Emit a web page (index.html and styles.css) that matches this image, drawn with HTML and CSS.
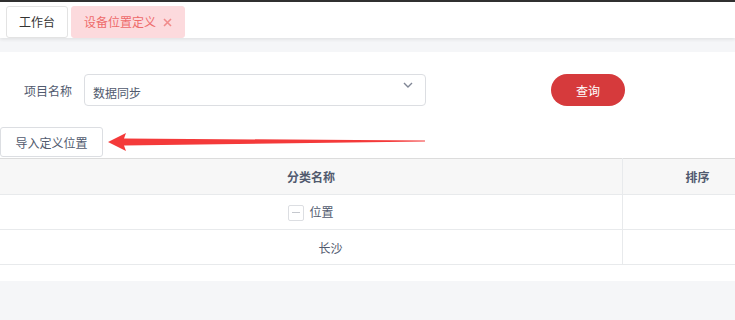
FILE: index.html
```html
<!DOCTYPE html>
<html>
<head>
    <meta charset="utf-8">
    <link rel="stylesheet" href="styles.css">
    <title>设备位置定义</title>
</head>
<body>
    <div class="topline"></div>
    <div class="tabbar">
        <div class="tab">工作台</div>
        <div class="tab tab-active">设备位置定义
            <svg class="tab-close" width="9" height="9" viewBox="0 0 9 9"><path d="M1 1 L8 8 M8 1 L1 8" stroke="#f08c8c" stroke-width="1.6"/></svg>
        </div>
    </div>

    <div class="panel">
        <div class="search-row">
            <label class="label">项目名称</label>
            <div class="select">
                <span>数据同步</span>
                <svg class="chevron" width="10" height="6" viewBox="0 0 10 6"><path d="M1 1 L5 5 L9 1" fill="none" stroke="#808695" stroke-width="1.4"/></svg>
            </div>
            <button class="btn-query" type="button">查询</button>
        </div>

        <div class="toolbar">
            <button class="btn-import" type="button">导入定义位置</button>
            <svg class="arrow" width="330" height="20" viewBox="0 0 330 20">
                <polygon points="0,9 18,0 16,5.5 317,7.5 317,8.5 16,12.5 18,18" fill="#f43a3a"/>
            </svg>
        </div>

        <table class="grid">
            <thead>
                <tr>
                    <th class="col-name">分类名称</th>
                    <th class="col-sort">排序</th>
                </tr>
            </thead>
            <tbody>
                <tr>
                    <td><span class="tree-toggle"></span>位置</td>
                    <td></td>
                </tr>
                <tr>
                    <td><span class="tree-indent"></span>长沙</td>
                    <td></td>
                </tr>
            </tbody>
        </table>
    </div>
</body>
</html>
```

FILE: styles.css
```css
body {
    margin: 0;
    background: #f5f6f8;
    font-family: "Noto Sans CJK SC", "Liberation Sans", sans-serif;
    font-size: 12px;
    color: #515a6e;
    overflow: hidden;
}

.topline {
    height: 2px;
    background: #303030;
}

.tabbar {
    height: 32px;
    padding: 4px 6px 0;
    display: flex;
    gap: 3px;
    background: #fff;
    box-shadow: 0 2px 3px rgba(0, 0, 0, 0.07);
}

.tab {
    height: 30px;
    line-height: 30px;
    padding: 0 12px;
    border: 1px solid #e3e3e3;
    border-radius: 3px;
    color: #333;
}

.tab-active {
    display: flex;
    align-items: center;
    gap: 7px;
    padding-right: 12px;
    background: #fcdadd;
    border-color: #fcdadd;
    color: #ee6b6b;
}

.panel {
    margin-top: 14px;
    padding: 22px 0 16px;
    background: #fff;
    overflow: hidden;
}

.search-row {
    display: flex;
    align-items: center;
    height: 32px;
    padding-left: 24px;
}

.label {
    width: 60px;
}

.select {
    position: relative;
    box-sizing: border-box;
    width: 342px;
    height: 32px;
    padding: 4px 8px 0;
    line-height: 28px;
    border: 1px solid #dcdee2;
    border-radius: 4px;
}

.chevron {
    position: absolute;
    right: 12px;
    top: 7px;
}

.btn-query {
    margin-left: 125px;
    width: 74px;
    height: 32px;
    border: none;
    border-radius: 16px;
    background: #d63a3c;
    color: #fff;
    font-family: inherit;
    font-size: 12px;
    cursor: pointer;
}

.toolbar {
    position: relative;
    margin-top: 21px;
    height: 31px;
}

.btn-import {
    box-sizing: border-box;
    height: 30px;
    width: 103px;
    padding: 0;
    border: 1px solid #dcdee2;
    border-radius: 3px;
    background: #fff;
    color: #515a6e;
    font-family: inherit;
    font-size: 12px;
}

.arrow {
    position: absolute;
    left: 108px;
    top: 6px;
}

.grid {
    width: 772px;
    border-collapse: collapse;
    table-layout: fixed;
}

.grid th,
.grid td {
    height: 34px;
    padding: 0;
    text-align: center;
    border-top: 1px solid #e8eaec;
    border-bottom: 1px solid #e8eaec;
}

.grid th {
    height: 35px;
    background: #f7f7f7;
    font-weight: bold;
    border-top: 1px solid #dcdcdc;
}

.col-name {
    width: 622px;
    border-right: 1px solid #e8eaec;
}

.grid td:first-child {
    border-right: 1px solid #e8eaec;
}

.tree-toggle {
    position: relative;
    display: inline-block;
    box-sizing: border-box;
    width: 16px;
    height: 16px;
    margin-right: 5px;
    border: 1px solid #dcdee2;
    border-radius: 2px;
    vertical-align: -4px;
}

.tree-toggle::after {
    content: "";
    position: absolute;
    left: 3px;
    right: 3px;
    top: 6px;
    height: 1px;
    background: #c5c8ce;
}

.tree-indent {
    display: inline-block;
    width: 39px;
}
```
